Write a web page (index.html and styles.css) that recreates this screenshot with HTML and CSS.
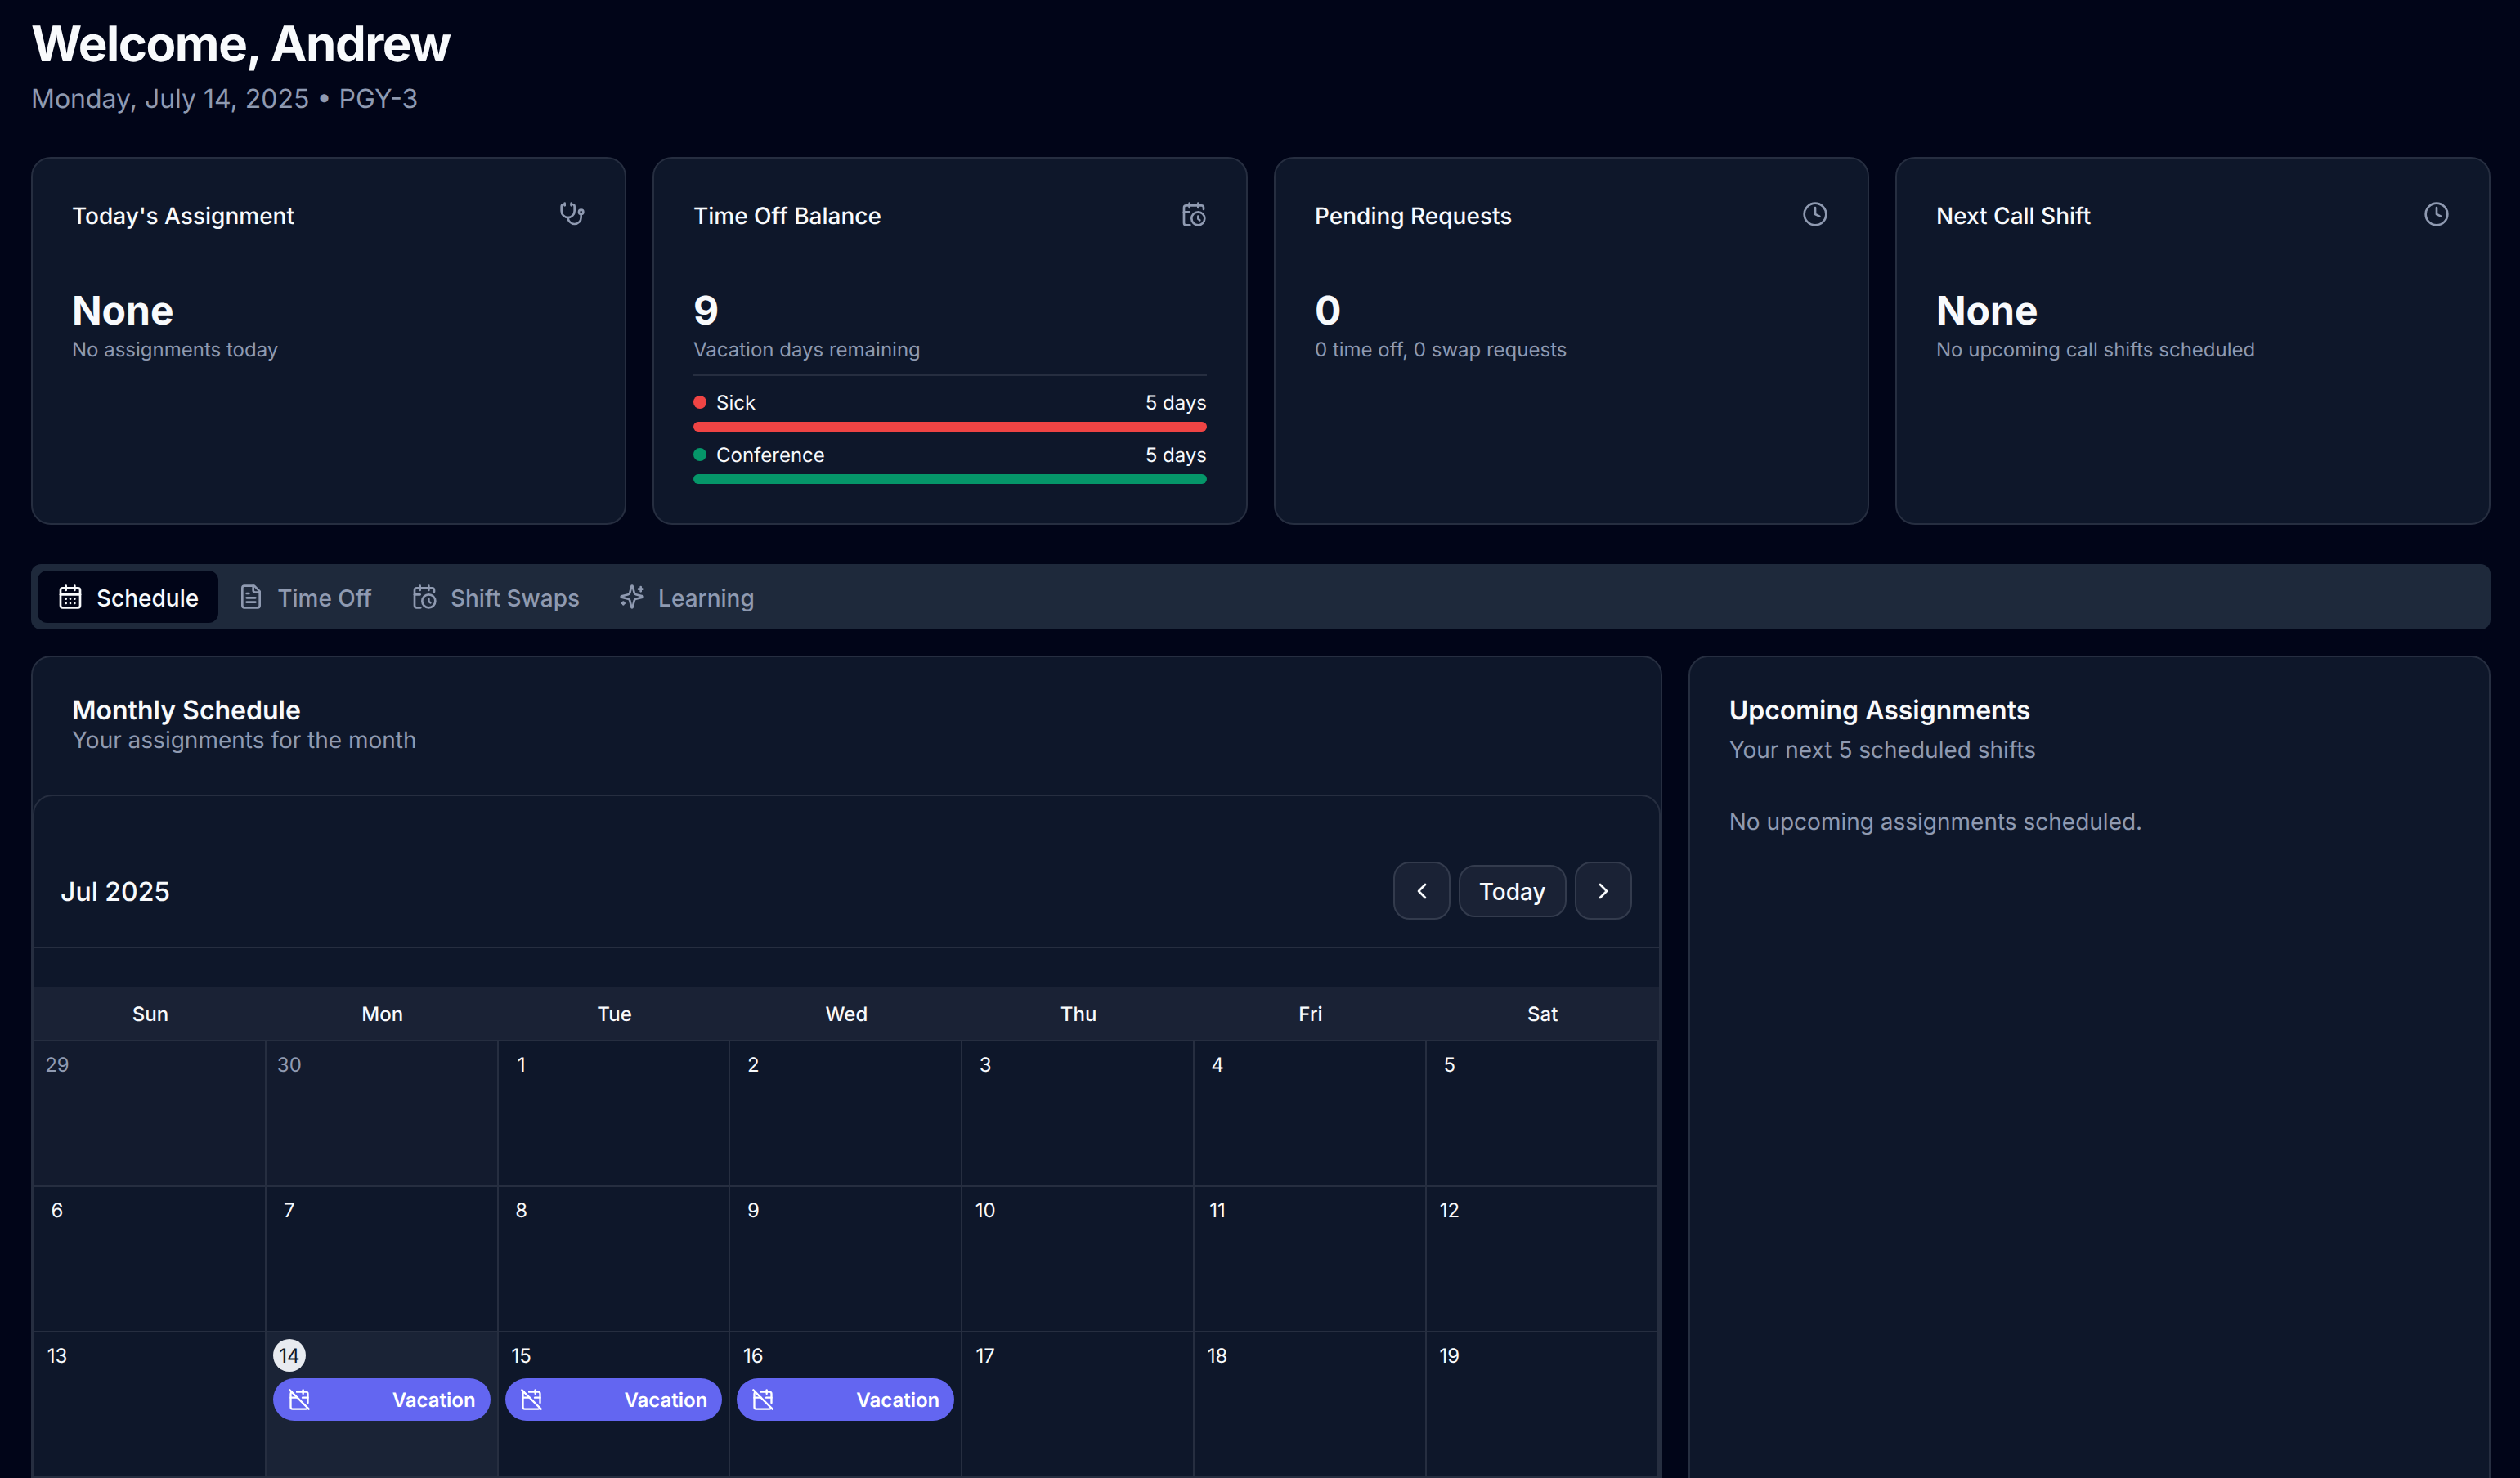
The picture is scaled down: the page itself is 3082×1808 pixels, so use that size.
FILE: index.html
```html
<!DOCTYPE html>
<html lang="en">
<head>
<meta charset="utf-8">
<title>Dashboard</title>
<link rel="stylesheet" href="styles.css">
</head>
<body>
<svg class="defs" aria-hidden="true">
  <symbol id="i-steth" viewBox="0 0 24 24"><path d="M11 2v2"/><path d="M5 2v2"/><path d="M5 3H4a2 2 0 0 0-2 2v4a6 6 0 0 0 12 0V5a2 2 0 0 0-2-2h-1"/><path d="M8 15a6 6 0 0 0 12 0v-3"/><circle cx="20" cy="10" r="2"/></symbol>
  <symbol id="i-calclock" viewBox="0 0 24 24"><path d="M21 7.5V6a2 2 0 0 0-2-2H5a2 2 0 0 0-2 2v14a2 2 0 0 0 2 2h3.5"/><path d="M16 2v4"/><path d="M8 2v4"/><path d="M3 10h5"/><path d="M17.5 17.5 16 16.3V14"/><circle cx="16" cy="16" r="6"/></symbol>
  <symbol id="i-clock" viewBox="0 0 24 24"><circle cx="12" cy="12" r="10"/><polyline points="12 6 12 12 16 14"/></symbol>
  <symbol id="i-caldays" viewBox="0 0 24 24"><path d="M8 2v4"/><path d="M16 2v4"/><rect width="18" height="18" x="3" y="4" rx="2"/><path d="M3 10h18"/><path d="M8 14h.01"/><path d="M12 14h.01"/><path d="M16 14h.01"/><path d="M8 18h.01"/><path d="M12 18h.01"/><path d="M16 18h.01"/></symbol>
  <symbol id="i-file" viewBox="0 0 24 24"><path d="M15 2H6a2 2 0 0 0-2 2v16a2 2 0 0 0 2 2h12a2 2 0 0 0 2-2V7Z"/><path d="M14 2v4a2 2 0 0 0 2 2h4"/><path d="M10 9H8"/><path d="M16 13H8"/><path d="M16 17H8"/></symbol>
  <symbol id="i-spark" viewBox="0 0 24 24"><path d="M9.937 15.5A2 2 0 0 0 8.5 14.063l-6.135-1.582a.5.5 0 0 1 0-.962L8.5 9.936A2 2 0 0 0 9.937 8.5l1.582-6.135a.5.5 0 0 1 .963 0L14.063 8.5A2 2 0 0 0 15.5 9.937l6.135 1.581a.5.5 0 0 1 0 .964L15.5 14.063a2 2 0 0 0-1.437 1.437l-1.582 6.135a.5.5 0 0 1-.963 0z"/><path d="M20 3v4"/><path d="M22 5h-4"/><path d="M4 17v2"/><path d="M5 18H3"/></symbol>
  <symbol id="i-caloff" viewBox="0 0 24 24"><path d="M4.2 4.2A2 2 0 0 0 3 6v14a2 2 0 0 0 2 2h14a2 2 0 0 0 1.82-1.18"/><path d="M21 15.5V6a2 2 0 0 0-2-2H9.5"/><path d="M16 2v4"/><path d="M3 10h7"/><path d="M21 10h-5.5"/><path d="m2 2 20 20"/></symbol>
  <symbol id="i-left" viewBox="0 0 24 24"><path d="m15 18-6-6 6-6"/></symbol>
  <symbol id="i-right" viewBox="0 0 24 24"><path d="m9 18 6-6-6-6"/></symbol>
</svg>

<main class="page">
  <header class="welcome">
    <h1>Welcome, Andrew</h1>
    <p>Monday, July 14, 2025 • PGY-3</p>
  </header>

  <section class="stats">
    <article class="card stat">
      <div class="stat-head"><h3>Today's Assignment</h3><svg class="icon muted"><use href="#i-steth"/></svg></div>
      <div class="stat-value">None</div>
      <p class="stat-note">No assignments today</p>
    </article>
    <article class="card stat">
      <div class="stat-head"><h3>Time Off Balance</h3><svg class="icon muted"><use href="#i-calclock"/></svg></div>
      <div class="stat-value">9</div>
      <p class="stat-note">Vacation days remaining</p>
      <div class="balances">
        <div class="balance">
          <div class="balance-row"><span class="balance-name"><i class="dot red"></i>Sick</span><span>5 days</span></div>
          <div class="bar red"></div>
        </div>
        <div class="balance">
          <div class="balance-row"><span class="balance-name"><i class="dot green"></i>Conference</span><span>5 days</span></div>
          <div class="bar green"></div>
        </div>
      </div>
    </article>
    <article class="card stat">
      <div class="stat-head"><h3>Pending Requests</h3><svg class="icon muted"><use href="#i-clock"/></svg></div>
      <div class="stat-value">0</div>
      <p class="stat-note">0 time off, 0 swap requests</p>
    </article>
    <article class="card stat">
      <div class="stat-head"><h3>Next Call Shift</h3><svg class="icon muted"><use href="#i-clock"/></svg></div>
      <div class="stat-value">None</div>
      <p class="stat-note">No upcoming call shifts scheduled</p>
    </article>
  </section>

  <nav class="tabs">
    <button class="tab active"><svg class="icon"><use href="#i-caldays"/></svg><span>Schedule</span></button>
    <button class="tab"><svg class="icon"><use href="#i-file"/></svg><span>Time Off</span></button>
    <button class="tab"><svg class="icon"><use href="#i-calclock"/></svg><span>Shift Swaps</span></button>
    <button class="tab"><svg class="icon"><use href="#i-spark"/></svg><span>Learning</span></button>
  </nav>

  <section class="content">
    <article class="card schedule">
      <div class="schedule-head">
        <h2>Monthly Schedule</h2>
        <p>Your assignments for the month</p>
      </div>
      <div class="calendar">
        <div class="cal-toolbar">
          <span class="cal-month">Jul 2025</span>
          <div class="cal-nav">
            <button class="cal-btn square"><svg class="icon"><use href="#i-left"/></svg></button>
            <button class="cal-btn today-btn">Today</button>
            <button class="cal-btn square"><svg class="icon"><use href="#i-right"/></svg></button>
          </div>
        </div>
        <div class="weekdays">
          <div>Sun</div><div>Mon</div><div>Tue</div><div>Wed</div><div>Thu</div><div>Fri</div><div>Sat</div>
        </div>
        <div class="days">
          <div class="day outside"><span class="num">29</span></div>
          <div class="day outside"><span class="num">30</span></div>
          <div class="day"><span class="num">1</span></div>
          <div class="day"><span class="num">2</span></div>
          <div class="day"><span class="num">3</span></div>
          <div class="day"><span class="num">4</span></div>
          <div class="day"><span class="num">5</span></div>
          <div class="day"><span class="num">6</span></div>
          <div class="day"><span class="num">7</span></div>
          <div class="day"><span class="num">8</span></div>
          <div class="day"><span class="num">9</span></div>
          <div class="day"><span class="num">10</span></div>
          <div class="day"><span class="num">11</span></div>
          <div class="day"><span class="num">12</span></div>
          <div class="day"><span class="num">13</span></div>
          <div class="day today"><span class="num">14</span><div class="event"><svg class="icon small"><use href="#i-caloff"/></svg>Vacation</div></div>
          <div class="day"><span class="num">15</span><div class="event"><svg class="icon small"><use href="#i-caloff"/></svg>Vacation</div></div>
          <div class="day"><span class="num">16</span><div class="event"><svg class="icon small"><use href="#i-caloff"/></svg>Vacation</div></div>
          <div class="day"><span class="num">17</span></div>
          <div class="day"><span class="num">18</span></div>
          <div class="day"><span class="num">19</span></div>
        </div>
      </div>
    </article>

    <aside class="card upcoming">
      <h2>Upcoming Assignments</h2>
      <p class="upcoming-sub">Your next 5 scheduled shifts</p>
      <p class="upcoming-empty">No upcoming assignments scheduled.</p>
    </aside>
  </section>
</main>
</body>
</html>
```
FILE: styles.css
```css
* { box-sizing: border-box; }
html, body {
  margin: 0;
  height: 100%;
  overflow: hidden;
  background: #010518;
}
body {
  font-family: Inter, "Liberation Sans", sans-serif;
  color: #f8fafc;
  text-rendering: geometricPrecision;
}
h1, h2, h3, p { margin: 0; }
button { font: inherit; border: 0; background: none; color: inherit; }
.defs { display: none; }

.icon {
  width: 32px;
  height: 32px;
  flex: none;
  fill: none;
  stroke: currentColor;
  stroke-width: 2;
  stroke-linecap: round;
  stroke-linejoin: round;
}
.icon.small { width: 28px; height: 28px; }
.muted { color: #8f9ab1; }

.page { padding: 18px 36px 0 38px; }

.welcome h1 {
  font-size: 60px;
  line-height: 72px;
  font-weight: 700;
  letter-spacing: -1.5px;
}
.welcome p {
  margin-top: 7px;
  font-size: 32px;
  line-height: 48px;
  color: #8f9ab1;
}

.stats {
  display: grid;
  grid-template-columns: repeat(4, 1fr);
  gap: 32px;
  margin-top: 47px;
}
.card {
  background: #0e172a;
  border: 2px solid #262e40;
  border-radius: 24px;
}
.stat { padding: 48px; }
.stat-head {
  display: flex;
  justify-content: space-between;
  align-items: center;
  height: 40px;
}
.stat-head h3 {
  margin-top: 4px;
  font-size: 28px;
  line-height: 40px;
  font-weight: 500;
}
.stat-value {
  margin-top: 66px;
  font-size: 48px;
  line-height: 64px;
  font-weight: 700;
}
.stat-note {
  font-size: 24px;
  line-height: 32px;
  color: #8f9ab1;
}
.balances {
  margin-top: 14px;
  padding-top: 16px;
  border-top: 2px solid #262e40;
  display: flex;
  flex-direction: column;
  gap: 12px;
}
.balance-row {
  display: flex;
  justify-content: space-between;
  align-items: center;
  height: 32px;
  font-size: 24px;
  line-height: 32px;
  margin-bottom: 8px;
}
.balance-row > span { margin-top: 2px; }
.balance-name { display: flex; align-items: center; gap: 12px; }
.dot { width: 16px; height: 16px; margin-top: -2px; border-radius: 50%; }
.bar { height: 12px; border-radius: 6px; }
.red { background: #ef4444; }
.green { background: #059669; }

.tabs {
  display: flex;
  margin-top: 48px;
  padding: 8px;
  height: 80px;
  background: #1e293b;
  border-radius: 12px;
}
.tab {
  display: flex;
  align-items: center;
  gap: 16px;
  padding: 0 24px;
  font-size: 28px;
  font-weight: 500;
  color: #8f9ab1;
  border-radius: 12px;
}
.tab span { margin-top: 4px; }
.tab.active { background: #010518; color: #f8fafc; }

.content {
  display: grid;
  grid-template-columns: repeat(3, 1fr);
  gap: 32px;
  margin-top: 32px;
}
.schedule { grid-column: span 2; }
.schedule-head { padding: 49px 48px 47px; }
.schedule-head h2,
.upcoming h2 {
  font-size: 32px;
  line-height: 32px;
  font-weight: 600;
}
.schedule-head p,
.upcoming p {
  font-size: 28px;
  line-height: 40px;
  color: #8f9ab1;
}
.calendar {
  border: 2px solid #262e40;
  border-radius: 24px;
  padding-bottom: 48px;
}
.cal-toolbar {
  display: flex;
  justify-content: space-between;
  align-items: center;
  padding: 80px 33px 33px 32px;
  border-bottom: 2px solid #262e40;
}
.cal-month { margin-top: 2px; font-size: 32px; line-height: 48px; font-weight: 500; }
.cal-nav { display: flex; align-items: center; gap: 10px; }
.cal-btn {
  display: flex;
  align-items: center;
  justify-content: center;
  height: 64px;
  width: 132px;
  font-size: 28px;
  font-weight: 500;
  background: #1a2235;
  border: 2px solid #333b4d;
  border-radius: 20px;
}
.cal-btn.square { width: 70px; height: 71px; }
.today-btn { padding-top: 4px; }

.weekdays {
  display: grid;
  grid-template-columns: repeat(7, 1fr);
  margin-top: 47px;
  height: 67px;
  padding-top: 2px;
  align-items: center;
  background: #1a2235;
  border-bottom: 2px solid #262e40;
  text-align: center;
  font-size: 24px;
  font-weight: 500;
}
.days {
  display: grid;
  grid-template-columns: repeat(7, 1fr);
  grid-auto-rows: 178px;
}
.day {
  padding: 8px;
  border-right: 2px solid #262e40;
  border-bottom: 2px solid #262e40;
  min-width: 0;
}
.day.outside { background: #131b2e; }
.day.outside .num { color: #8f9ab1; }
.day.today { background: #1a2336; }
.num {
  display: flex;
  align-items: center;
  justify-content: center;
  width: 40px;
  height: 40px;
  padding-top: 2px;
  font-size: 24px;
  line-height: 32px;
  border-radius: 50%;
}
.today .num { background: #e8ebf0; color: #0e172a; }
.event {
  display: flex;
  align-items: center;
  justify-content: space-between;
  height: 52px;
  margin-top: 8px;
  padding: 0 18px;
  font-size: 24px;
  font-weight: 600;
  color: #fff;
  background: #6366f1;
  border-radius: 26px;
}

.upcoming { padding: 49px 48px 48px; }
.upcoming-sub { margin-top: 12px; }
.upcoming-empty { margin-top: 48px; }
```
